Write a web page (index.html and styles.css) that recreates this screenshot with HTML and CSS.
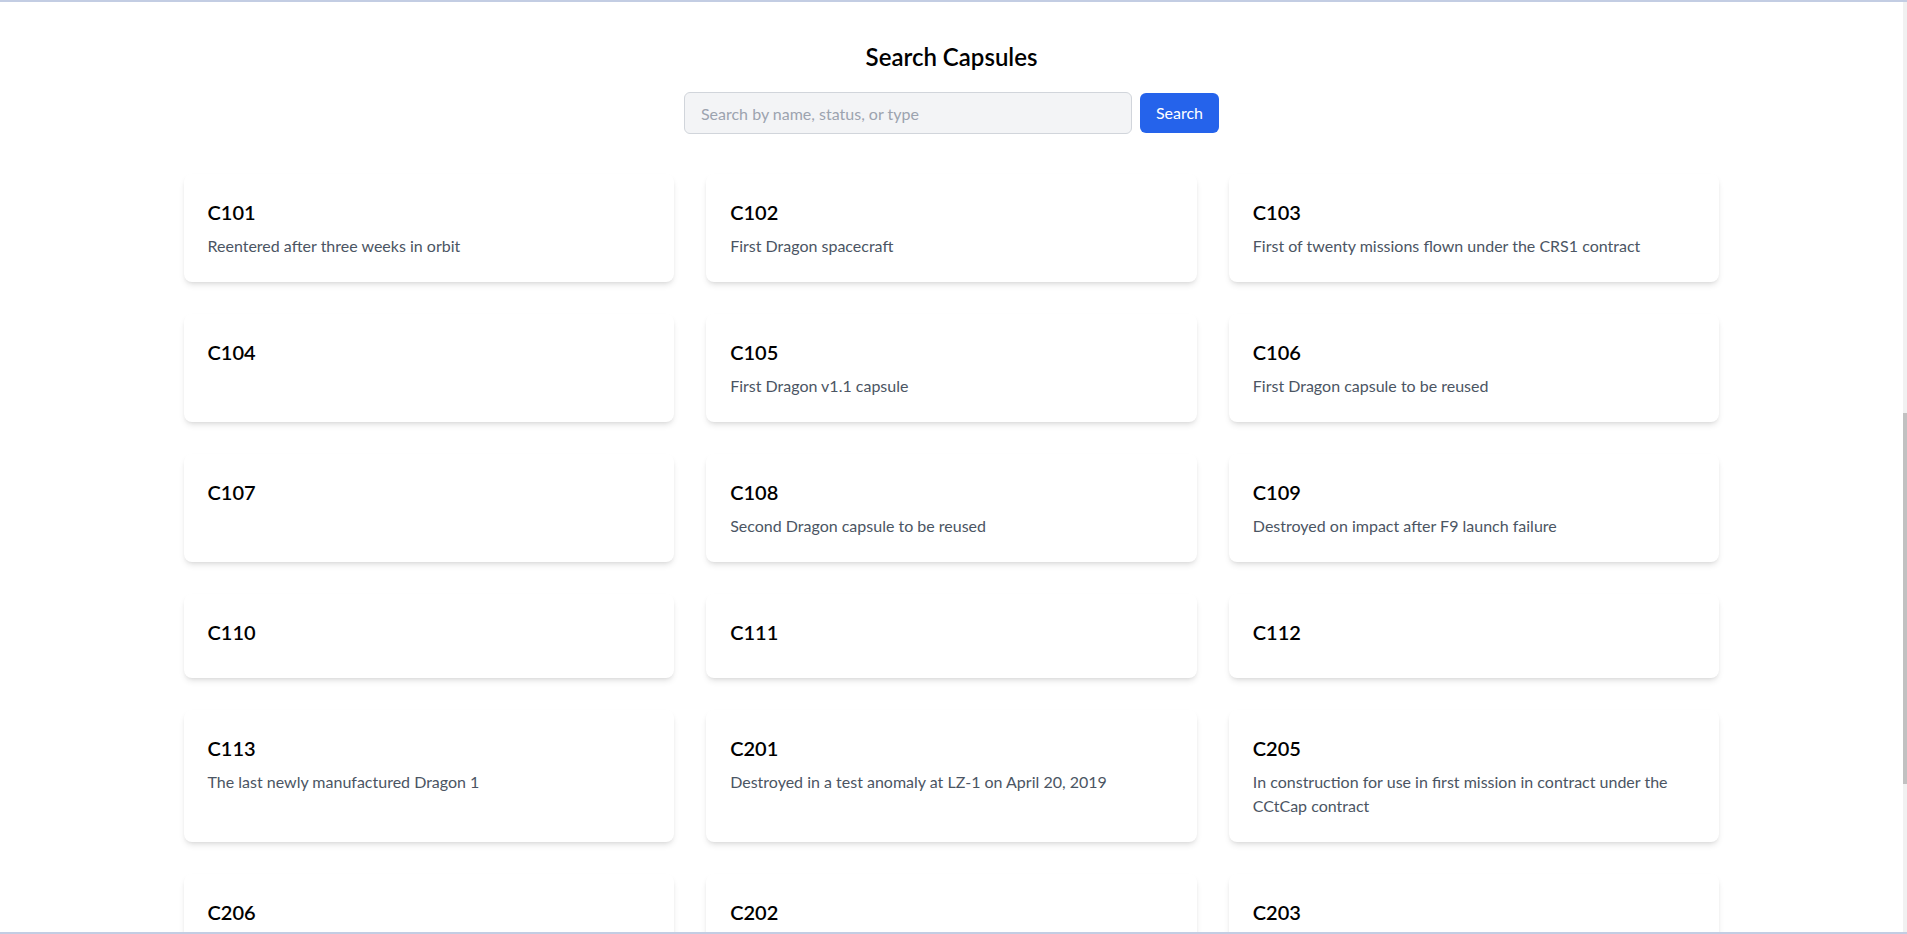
FILE: index.html
```html
<!DOCTYPE html>
<html lang="en">
<head>
<meta charset="utf-8">
<title>Search Capsules</title>
<link rel="stylesheet" href="styles.css">
</head>
<body>
<div class="page">
  <main class="container">
    <h1 class="title">Search Capsules</h1>
    <form class="search">
      <input class="search-input" type="text" placeholder="Search by name, status, or type">
      <button class="search-btn" type="button">Search</button>
    </form>
    <div class="grid">
      <div class="card"><h2 class="card-title">C101</h2><p class="card-text">Reentered after three weeks in orbit</p></div>
      <div class="card"><h2 class="card-title">C102</h2><p class="card-text">First Dragon spacecraft</p></div>
      <div class="card"><h2 class="card-title">C103</h2><p class="card-text">First of twenty missions flown under the CRS1 contract</p></div>
      <div class="card"><h2 class="card-title">C104</h2><p class="card-text"></p></div>
      <div class="card"><h2 class="card-title">C105</h2><p class="card-text">First Dragon v1.1 capsule</p></div>
      <div class="card"><h2 class="card-title">C106</h2><p class="card-text">First Dragon capsule to be reused</p></div>
      <div class="card"><h2 class="card-title">C107</h2><p class="card-text"></p></div>
      <div class="card"><h2 class="card-title">C108</h2><p class="card-text">Second Dragon capsule to be reused</p></div>
      <div class="card"><h2 class="card-title">C109</h2><p class="card-text">Destroyed on impact after F9 launch failure</p></div>
      <div class="card"><h2 class="card-title">C110</h2><p class="card-text"></p></div>
      <div class="card"><h2 class="card-title">C111</h2><p class="card-text"></p></div>
      <div class="card"><h2 class="card-title">C112</h2><p class="card-text"></p></div>
      <div class="card"><h2 class="card-title">C113</h2><p class="card-text">The last newly manufactured Dragon 1</p></div>
      <div class="card"><h2 class="card-title">C201</h2><p class="card-text">Destroyed in a test anomaly at LZ-1 on April 20, 2019</p></div>
      <div class="card"><h2 class="card-title">C205</h2><p class="card-text">In construction for use in first mission in contract under the CCtCap contract</p></div>
      <div class="card"><h2 class="card-title">C206</h2><p class="card-text"></p></div>
      <div class="card"><h2 class="card-title">C202</h2><p class="card-text"></p></div>
      <div class="card"><h2 class="card-title">C203</h2><p class="card-text"></p></div>
    </div>
  </main>
</div>
<div class="frame"></div>
<div class="scrollbar"><div class="scrollbar-thumb"></div></div>
</body>
</html>
```
FILE: styles.css
```css
html { overflow: hidden; }
body {
  margin: 0;
  font-family: "Lato", "Noto Sans", sans-serif;
  color: #000;
  background: #fff;
}
.page { padding-right: 4px; }
.container {
  max-width: 1536px;
  margin: 0 auto;
  padding-top: 41px;
}
.title {
  margin: 0 0 19px;
  text-align: center;
  font-size: 24px;
  line-height: 32px;
  font-weight: 600;
}
.search {
  display: flex;
  justify-content: center;
  align-items: center;
  gap: 8px;
  margin: 0 0 40px;
}
.search-input {
  box-sizing: border-box;
  width: 448px;
  height: 42px;
  padding: 8px 16px;
  font: inherit;
  font-size: 16px;
  line-height: 24px;
  color: #111827;
  background: #f3f4f6;
  border: 1px solid #d1d5db;
  border-radius: 6px;
  outline: none;
}
.search-input::placeholder { color: #9ca3af; }
.search-btn {
  height: 40px;
  padding: 8px 16px;
  font: inherit;
  font-size: 16px;
  line-height: 24px;
  color: #fff;
  background: #2563eb;
  border: 0;
  border-radius: 6px;
}
.grid {
  display: grid;
  grid-template-columns: repeat(3, 1fr);
  gap: 32px;
}
.card {
  background: #fff;
  border-radius: 8px;
  padding: 24px;
  box-shadow: 0 4px 6px -1px rgba(0,0,0,.1), 0 2px 4px -2px rgba(0,0,0,.1);
}
.card-title {
  margin: 0;
  font-size: 20px;
  line-height: 28px;
  font-weight: 600;
}
.card-text {
  margin: 8px 0 0;
  font-size: 16px;
  line-height: 24px;
  color: #4b5563;
}
.frame {
  position: fixed;
  inset: 0;
  border-top: 2px solid #c3cde3;
  border-bottom: 2px solid #c3cde3;
  pointer-events: none;
}
.scrollbar {
  position: fixed;
  top: 2px;
  right: 0;
  bottom: 2px;
  width: 4px;
  background: #f1f1f1;
}
.scrollbar-thumb {
  margin-top: 411px;
  height: 371px;
  background: #c1c1c1;
}
```
